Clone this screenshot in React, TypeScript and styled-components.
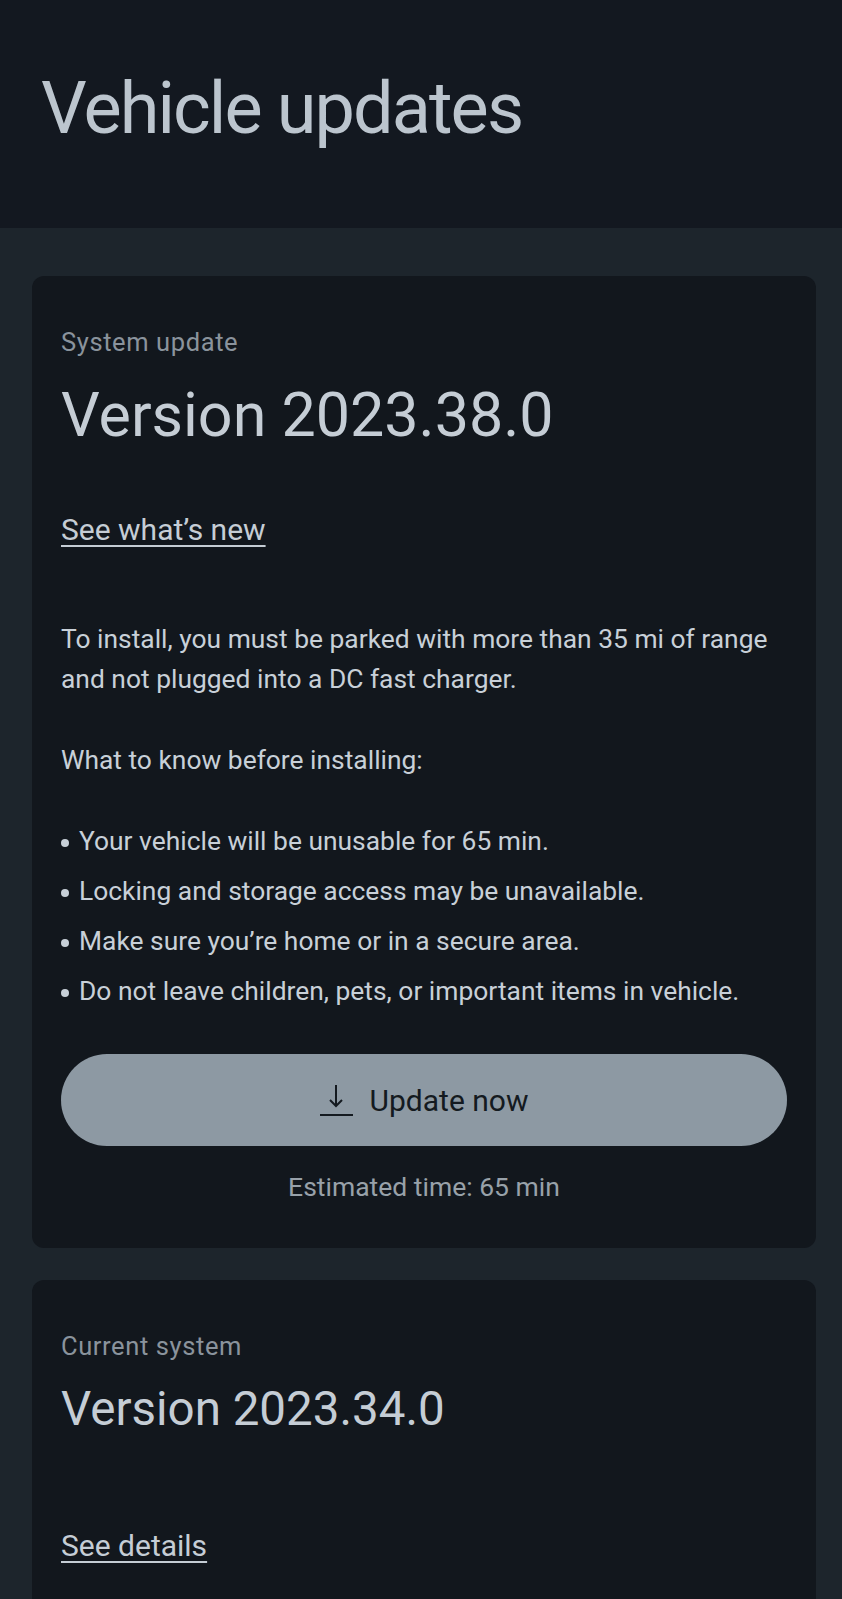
import React from "react";
import styled, { createGlobalStyle } from "styled-components";

const GlobalStyle = createGlobalStyle`
  html, body {
    margin: 0;
    padding: 0;
    background: #1d252c;
  }
  body {
    font-family: Roboto, "Liberation Sans", sans-serif;
    -webkit-font-smoothing: antialiased;
  }
  * { box-sizing: border-box; }
`;

const Page = styled.div`
  display: flex;
  flex-direction: column;
  min-height: 1599px;
  background: #1d252c;
`;

const Header = styled.header`
  height: 228px;
  background: #131820;
  padding: 73px 0 0 41px;
`;

const Title = styled.h1`
  margin: 0;
  font-weight: 400;
  font-size: 72px;
  line-height: 72px;
  letter-spacing: -1.9px;
  color: #bcc5ce;
`;

const Main = styled.main`
  display: flex;
  flex-direction: column;
  gap: 32px;
  padding: 48px 26px 0 32px;
`;

const Card = styled.section<{ $padBottom: number }>`
  display: flex;
  flex-direction: column;
  background: #12171d;
  border-radius: 12px;
  padding: 51px 29px ${(p) => p.$padBottom}px 29px;
`;

const Label = styled.div`
  font-size: 25.5px;
  line-height: 30px;
  letter-spacing: 0.6px;
  color: #8a939c;
`;

const Version = styled.div<{ $size: number; $mt: number }>`
  margin-top: ${(p) => p.$mt}px;
  font-size: ${(p) => p.$size}px;
  line-height: ${(p) => Math.round(p.$size * 1.2)}px;
  color: #c5cdd5;
`;

const Link = styled.a<{ $mt: number }>`
  align-self: flex-start;
  margin-top: ${(p) => p.$mt}px;
  font-size: 30px;
  line-height: 36px;
  color: #c5cdd5;
  text-decoration: underline;
  text-decoration-thickness: 2px;
  text-underline-offset: 5px;
  cursor: pointer;
`;

const Body = styled.div`
  display: flex;
  flex-direction: column;
  gap: 41px;
  margin-top: 71px;
  font-size: 26.4px;
  line-height: 40px;
  color: #c8d0d8;
`;

const Para = styled.p`
  margin: 0;
`;

const List = styled.ul`
  display: flex;
  flex-direction: column;
  gap: 10px;
  margin: 0;
  padding: 0;
  list-style: none;
`;

const Item = styled.li`
  display: flex;
  align-items: center;
  gap: 10px;
`;

const Dot = styled.span`
  flex: none;
  width: 8px;
  height: 8px;
  margin-top: 3px;
  border-radius: 50%;
  background: currentColor;
`;

const UpdateButton = styled.button`
  display: flex;
  align-items: center;
  justify-content: center;
  gap: 16px;
  margin-top: 43px;
  height: 92px;
  border: none;
  border-radius: 46px;
  background: #8d99a3;
  color: #141a20;
  font-family: inherit;
  font-size: 30px;
  cursor: pointer;
`;

const Estimate = styled.div`
  margin-top: 21px;
  text-align: center;
  font-size: 26.5px;
  line-height: 40px;
  color: #98a1a9;
`;

const DownloadIcon = () => (
  <svg width="34" height="34" viewBox="0 0 34 34" fill="none" stroke="#141a20" strokeWidth="2" strokeLinecap="butt">
    <line x1="16" y1="2" x2="16" y2="23" />
    <polyline points="10,17 16,23 22,17" strokeLinejoin="miter" />
    <line x1="0" y1="32" x2="33" y2="32" />
  </svg>
);

const bullets = [
  "Your vehicle will be unusable for 65 min.",
  "Locking and storage access may be unavailable.",
  "Make sure you\u2019re home or in a secure area.",
  "Do not leave children, pets, or important items in vehicle.",
];

export default function App() {
  return (
    <>
      <GlobalStyle />
      <Page>
        <Header>
          <Title>Vehicle updates</Title>
        </Header>
        <Main>
          <Card $padBottom={41}>
            <Label>System update</Label>
            <Version $size={61} $mt={22}>
              Version 2023.38.0
            </Version>
            <Link $mt={60}>See what’s new</Link>
            <Body>
              <Para>
                To install, you must be parked with more than 35 mi of range and not plugged into a DC fast charger.
              </Para>
              <Para>What to know before installing:</Para>
              <List>
                {bullets.map((b) => (
                  <Item key={b}>
                    <Dot />
                    <span>{b}</span>
                  </Item>
                ))}
              </List>
            </Body>
            <UpdateButton>
              <DownloadIcon />
              <span>Update now</span>
            </UpdateButton>
            <Estimate>Estimated time: 65 min</Estimate>
          </Card>
          <Card $padBottom={80}>
            <Label>Current system</Label>
            <Version $size={47.5} $mt={20}>
              Version 2023.34.0
            </Version>
            <Link $mt={90}>See details</Link>
          </Card>
        </Main>
      </Page>
    </>
  );
}
